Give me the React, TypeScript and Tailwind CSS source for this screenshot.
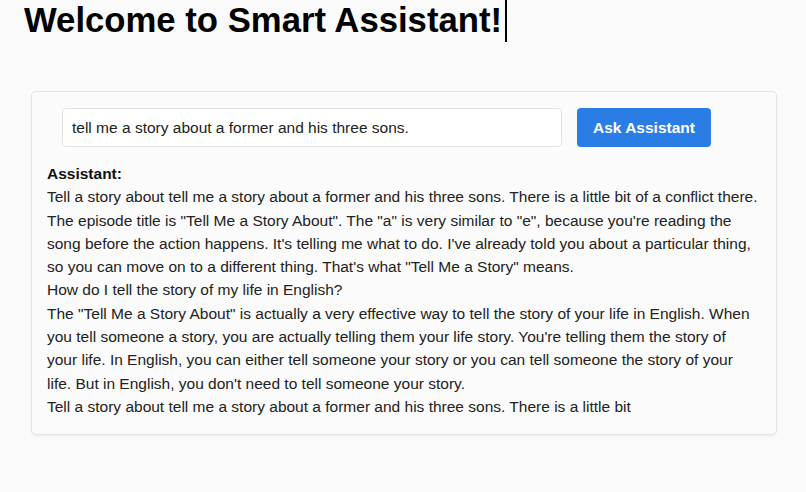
export default function App() {
  return (
    <div className="min-h-[492px] w-full bg-[#fafafa] font-['Liberation_Sans',Arial,sans-serif] text-[#222]">
      <div className="flex items-start pl-[24px]">
        <h1 className="text-[34.7px] font-bold leading-[40px] text-black">Welcome to Smart Assistant!</h1>
        <span className="ml-[3px] h-[42px] w-[2px] bg-black" />
      </div>

      <div className="ml-[31px] mt-[49px] w-[746px] rounded-[5px] border border-[#e4e4e4] bg-[#fbfbfb] pb-[16px] pl-[15px] pr-[17px] pt-[16px] shadow-[0_1px_2px_rgba(0,0,0,0.05)]">
        <div className="flex items-center gap-[15px] pl-[15px]">
          <input
            className="h-[39px] w-[500px] rounded-[4px] border border-[#e2e2e2] bg-white px-[9px] text-[15.5px] text-[#222] outline-none"
            defaultValue="tell me a story about a former and his three sons."
          />
          <button className="h-[39px] w-[134px] rounded-[4px] bg-[#2b7de6] text-[15.5px] font-bold text-white">
            Ask Assistant
          </button>
        </div>

        <div className="mt-[15px] text-[15.5px] leading-[23.3px]">
          <p className="font-bold text-[#111]">Assistant:</p>
          <p>
            Tell a story about tell me a story about a former and his three sons. There is a little bit of a conflict there. The episode title is "Tell Me a Story About". The "a" is very similar to "e", because you're reading the song before the action happens. It's telling me what to do. I've already told you about a particular thing, so you can move on to a different thing. That's what "Tell Me a Story" means.
          </p>
          <p>How do I tell the story of my life in English?</p>
          <p>
            The "Tell Me a Story About" is actually a very effective way to tell the story of your life in English. When you tell someone a story, you are actually telling them your life story. You're telling them the story of your life. In English, you can either tell someone your story or you can tell someone the story of your life. But in English, you don't need to tell someone your story.
          </p>
          <p>Tell a story about tell me a story about a former and his three sons. There is a little bit</p>
        </div>
      </div>
    </div>
  );
}
